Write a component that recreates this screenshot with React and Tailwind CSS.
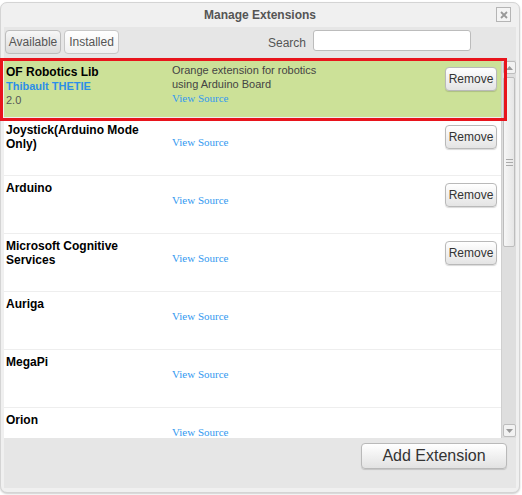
import React from "react";

const extensions = [
  { name: "OF Robotics Lib", author: "Thibault THETIE", version: "2.0", desc: ["Orange extension for robotics", "using Arduino Board"], installed: true, selected: true },
  { name: "Joystick(Arduino Mode Only)", installed: true },
  { name: "Arduino", installed: true },
  { name: "Microsoft Cognitive Services", installed: true },
  { name: "Auriga" },
  { name: "MegaPi" },
  { name: "Orion" },
];

function ExtensionRow({ ext }) {
  return (
    <div className={`h-[58px] shrink-0 flex border-b border-[#eeeeee] ${ext.selected ? "bg-[#cce198]" : "bg-white"}`}>
      <div className="w-[152px] pl-[2px] pt-[5px]">
        <div className="text-[12px] leading-[14px] font-bold text-black">{ext.name}</div>
        {ext.author && <div className="text-[11px] leading-[14px] font-bold text-[#2b8fe8]">{ext.author}</div>}
        {ext.version && <div className="text-[11px] leading-[14px] text-[#555]">{ext.version}</div>}
      </div>
      <div className="ml-[16px] flex-1 pt-[3px] text-[11px] leading-[14px]">
        <div className="min-h-[14px] text-[#444]">
          {ext.desc && ext.desc.map((d, i) => <div key={i}>{d}</div>)}
        </div>
        <div className="font-['Liberation_Serif',serif] text-[#3399f0]">View Source</div>
      </div>
      {ext.installed && (
        <div className="pt-[6px] pr-[4px]">
          <button className="w-[52px] h-[24px] rounded-[4px] border border-[#b9b9b9] bg-gradient-to-b from-white to-[#e4e4e4] text-[12px] text-[#333] shadow-[0_1px_1px_rgba(0,0,0,0.15)]">
            Remove
          </button>
        </div>
      )}
    </div>
  );
}

export default function App() {
  return (
    <div className="w-[522px] h-[495px] bg-white relative overflow-hidden font-['Liberation_Sans',Arial,sans-serif]">
      <div className="mt-[2px] w-[520px] h-[491px] rounded-[7px] bg-[#f0f0f0] border border-[#d4d4d4] flex flex-col px-[3px] pb-[4px] shadow-[0_1px_2px_rgba(0,0,0,0.2)]">
        {/* title bar */}
        <div className="h-[24px] shrink-0 flex items-center justify-center relative">
          <span className="text-[12px] font-bold text-[#555]">Manage Extensions</span>
          <div className="absolute right-[5px] top-[4px] w-[15px] h-[15px] border border-[#b5b5b5] bg-[#f4f4f4] flex items-center justify-center">
            <svg width="8" height="8" viewBox="0 0 8 8">
              <path d="M1 1L7 7M7 1L1 7" stroke="#999" strokeWidth="1.8" />
            </svg>
          </div>
        </div>
        {/* content */}
        <div className="flex-1 bg-[#e6e6e6] flex flex-col">
          <div className="h-[33px] shrink-0 flex items-start pt-[3px] pl-[1px]">
            <button className="h-[24px] w-[56px] rounded-[4px] border border-[#bdbdbd] bg-gradient-to-b from-[#f7f7f7] to-[#dcdcdc] text-[12px] text-[#555]">
              Available
            </button>
            <button className="ml-[3px] h-[24px] w-[55px] rounded-[4px] border border-[#c8c8c8] bg-gradient-to-b from-white to-[#f0f0f0] text-[12px] text-[#555]">
              Installed
            </button>
            <span className="ml-[149px] mt-[4px] text-[12px] text-[#555]">Search</span>
            <input className="ml-[7px] w-[158px] h-[21px] rounded-[3px] border border-[#bcbcbc] bg-white" />
          </div>
          <div className="flex h-[378px] shrink-0">
            <div className="w-[499px] h-full overflow-hidden flex flex-col">
              {extensions.map((ext, i) => (
                <ExtensionRow key={i} ext={ext} />
              ))}
            </div>
            {/* scrollbar */}
            <div className="w-[15px] h-full bg-[#dedede] border-l border-[#cfcfcf] flex flex-col items-center">
              <div className="w-[13px] h-[13px] mt-[1px] border border-[#bdbdbd] bg-[#f2f2f2] rounded-[2px] flex items-center justify-center">
                <svg width="7" height="4" viewBox="0 0 7 4"><path d="M0 4L3.5 0L7 4Z" fill="#999" /></svg>
              </div>
              <div className="w-[12px] h-[170px] mt-[3px] border border-[#bdbdbd] bg-gradient-to-r from-[#f6f6f6] to-[#e6e6e6] rounded-[2px] flex flex-col items-center justify-center gap-[2px]">
                <div className="w-[7px] h-px bg-[#aaa]" />
                <div className="w-[7px] h-px bg-[#aaa]" />
                <div className="w-[7px] h-px bg-[#aaa]" />
              </div>
              <div className="flex-1" />
              <div className="w-[13px] h-[13px] mb-[1px] border border-[#bdbdbd] bg-[#f2f2f2] rounded-[2px] flex items-center justify-center">
                <svg width="7" height="4" viewBox="0 0 7 4"><path d="M0 0L3.5 4L7 0Z" fill="#999" /></svg>
              </div>
            </div>
          </div>
          <div className="flex-1 flex justify-end items-start pt-[5px] pr-[9px]">
            <button className="w-[146px] h-[26px] rounded-[4px] border border-[#b9b9b9] bg-gradient-to-b from-white to-[#e2e2e2] text-[16px] text-[#333] shadow-[0_1px_1px_rgba(0,0,0,0.15)]">
              Add Extension
            </button>
          </div>
        </div>
      </div>
      {/* highlight annotation */}
      <div className="absolute left-0 top-[58px] w-[507px] h-[63px] border-[3px] border-[#e8141c] pointer-events-none" />
    </div>
  );
}
